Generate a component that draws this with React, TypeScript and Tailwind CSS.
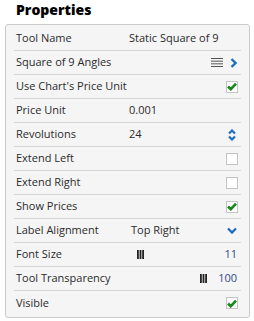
import React from "react";

const Check = ({ checked }: { checked: boolean }) => (
  <div className="w-[12px] h-[12px] border border-[#c4c4c4] bg-white flex items-center justify-center">
    {checked && (
      <svg width="10" height="9" viewBox="0 0 10 9">
        <path d="M1 4.5 L3.8 7.2 L9 1.6" stroke="#17891a" strokeWidth="2.6" fill="none" />
      </svg>
    )}
  </div>
);

const Grip = () => (
  <svg width="7" height="9" viewBox="0 0 7 9">
    <rect x="0" y="0" width="1.8" height="9" fill="#222" />
    <rect x="2.6" y="0" width="1.8" height="9" fill="#222" />
    <rect x="5.2" y="0" width="1.8" height="9" fill="#222" />
  </svg>
);

const Row = ({ label, children, last }: { label: string; children?: React.ReactNode; last?: boolean }) => (
  <div className={"h-[24px] flex items-center pl-[2px] pr-[2px] " + (last ? "" : "border-b border-[#d6d6d6]")}>
    <div className="w-[113px] shrink-0">{label}</div>
    <div className="flex-1 flex items-center min-w-0">{children}</div>
  </div>
);

export default function App() {
  return (
    <div className="w-[254px] h-[321px] bg-white text-[#2b2b2b]" style={{ fontFamily: '"Open Sans", sans-serif' }}>
      <div className="h-[24px] pl-[16px] pt-[0px] text-[14px] leading-[20px] font-extrabold text-black">Properties</div>
      <div className="mx-[5px] w-[245px] border border-[#cacaca] rounded-[3px] bg-[#f5f5f5] px-[8px] pt-[2px] pb-[2px] text-[11px]">
        <Row label="Tool Name">
          <span>Static Square of 9</span>
        </Row>
        <Row label="Square of 9 Angles">
          <div className="ml-auto flex items-center gap-[7px] pr-[2px]">
            <svg width="12" height="9" viewBox="0 0 12 9">
              <rect x="0" y="0" width="12" height="1" fill="#555" />
              <rect x="0" y="2.67" width="12" height="1" fill="#555" />
              <rect x="0" y="5.33" width="12" height="1" fill="#555" />
              <rect x="0" y="8" width="12" height="1" fill="#555" />
            </svg>
            <svg width="7" height="10" viewBox="0 0 7 10">
              <path d="M1.5 1 L5.5 5 L1.5 9" stroke="#1e6fc0" strokeWidth="2.4" fill="none" />
            </svg>
          </div>
        </Row>
        <Row label="Use Chart's Price Unit">
          <div className="ml-auto pr-[1px]"><Check checked /></div>
        </Row>
        <Row label="Price Unit">
          <span>0.001</span>
        </Row>
        <Row label="Revolutions">
          <span>24</span>
          <div className="ml-auto pr-[3px]">
            <svg width="8" height="12" viewBox="0 0 8 12">
              <path d="M1 4.5 L4 1.5 L7 4.5" stroke="#1e6fc0" strokeWidth="2.2" fill="none" />
              <path d="M1 7.5 L4 10.5 L7 7.5" stroke="#1e6fc0" strokeWidth="2.2" fill="none" />
            </svg>
          </div>
        </Row>
        <Row label="Extend Left">
          <div className="ml-auto pr-[1px]"><Check checked={false} /></div>
        </Row>
        <Row label="Extend Right">
          <div className="ml-auto pr-[1px]"><Check checked={false} /></div>
        </Row>
        <Row label="Show Prices">
          <div className="ml-auto pr-[1px]"><Check checked /></div>
        </Row>
        <Row label="Label Alignment">
          <span className="pl-[2px]">Top Right</span>
          <div className="ml-auto pr-[2px]">
            <svg width="10" height="7" viewBox="0 0 10 7">
              <path d="M1 1.5 L5 5.5 L9 1.5" stroke="#1e6fc0" strokeWidth="2.4" fill="none" />
            </svg>
          </div>
        </Row>
        <Row label="Font Size">
          <div className="pl-[8px]"><Grip /></div>
          <span className="ml-auto pr-[2px] text-[#2a4a8a]">11</span>
        </Row>
        <Row label="Tool Transparency">
          <div className="ml-auto flex items-center gap-[11px] pr-[2px]">
            <Grip />
            <span className="text-[#2a4a8a]">100</span>
          </div>
        </Row>
        <Row label="Visible" last>
          <div className="ml-auto pr-[1px]"><Check checked /></div>
        </Row>
      </div>
    </div>
  );
}
